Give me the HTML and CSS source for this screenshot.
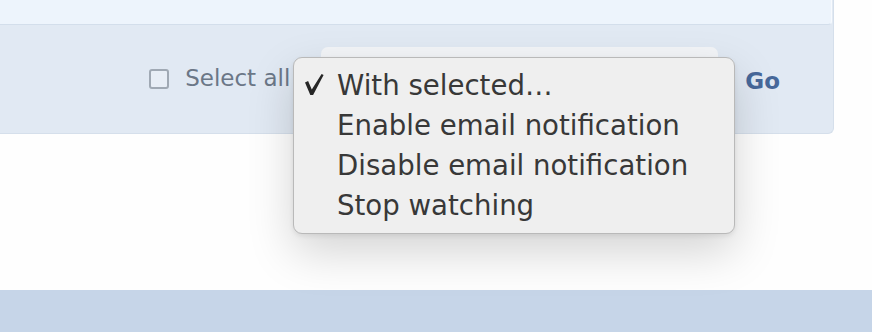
FILE: index.html
```html
<!DOCTYPE html>
<html lang="en">
<head>
<meta charset="utf-8">
<title>Watched threads</title>
<link rel="stylesheet" href="styles.css">
</head>
<body>
<div class="page">
  <div class="block">
    <div class="block-body"></div>
    <div class="block-footer">
      <label class="select-all">
        <span class="checkbox"></span>
        <span class="select-all-text">Select all</span>
      </label>
      <div class="select-box"></div>
      <span class="go-btn">Go</span>
    </div>
    <ul class="popup-menu">
      <li class="menu-item"><span class="check"><svg class="check-icon" viewBox="0 0 19 21" width="19" height="21"><path d="M0 8.6 L3.1 7.1 L6.8 15.4 L16.6 0 L18.6 1.1 L8.1 21 L5.3 21 Z" fill="#262626"/></svg></span><span>With selected…</span></li>
      <li class="menu-item"><span class="check"></span><span>Enable email notification</span></li>
      <li class="menu-item"><span class="check"></span><span>Disable email notification</span></li>
      <li class="menu-item"><span class="check"></span><span>Stop watching</span></li>
    </ul>
  </div>
</div>
<div class="page-footer"></div>
</body>
</html>
```

FILE: styles.css
```css
html, body {
  margin: 0;
  padding: 0;
}
body {
  background: #fefefe;
  font-family: "DejaVu Sans", Verdana, sans-serif;
  width: 872px;
  height: 332px;
  overflow: hidden;
}
.page {
  height: 290px;
}
.block {
  position: relative;
  width: 833px;
  background: #e1e9f3;
  border-right: 1px solid #d5dfeb;
  border-bottom: 1px solid #d5dfeb;
  border-bottom-right-radius: 6px;
}
.block-body {
  height: 24px;
  background: #edf4fc;
  border-bottom: 1px solid #d3deeb;
  border-right: 1px solid #f7fafe;
  border-bottom-right-radius: 4px;
  margin-right: 1px;
}
.block-footer {
  height: 108px;
  display: flex;
  align-items: center;
  justify-content: flex-end;
  padding-right: 53px;
}
.select-all {
  display: flex;
  align-items: center;
  color: #6b7787;
  font-size: 23px;
}
.checkbox {
  box-sizing: border-box;
  width: 20px;
  height: 20px;
  border: 2px solid #a0a9b4;
  border-radius: 3px;
  background: #e8eef6;
  margin-right: 16px;
}
.select-all-text {
  line-height: 28px;
  margin-top: -2px;
}
.select-box {
  width: 397px;
  height: 64px;
  margin: 22px 27px 0 31px;
  background: #f3f5f8;
  border-radius: 7px;
  align-self: flex-start;
}
.go-btn {
  color: #47689a;
  font-weight: bold;
  font-size: 23px;
  margin-top: 4px;
}
.popup-menu {
  position: absolute;
  left: 293px;
  top: 57px;
  width: 442px;
  height: 177px;
  margin: 0;
  padding: 7px 0 0 0;
  box-sizing: border-box;
  list-style: none;
  background: #efefef;
  border: 1px solid #b9b9b9;
  border-radius: 9px;
  box-shadow: 0 18px 46px rgba(0, 0, 0, 0.17), 0 2px 5px rgba(0, 0, 0, 0.08);
}
.menu-item {
  display: flex;
  align-items: center;
  height: 40px;
  padding-left: 11px;
  font-size: 27.6px;
  color: #383838;
}
.check {
  width: 32px;
  flex: none;
  display: flex;
  align-items: center;
}
.check-icon {
  display: block;
  margin-top: -1px;
}
.page-footer {
  height: 42px;
  background: #c6d5e8;
}
```
